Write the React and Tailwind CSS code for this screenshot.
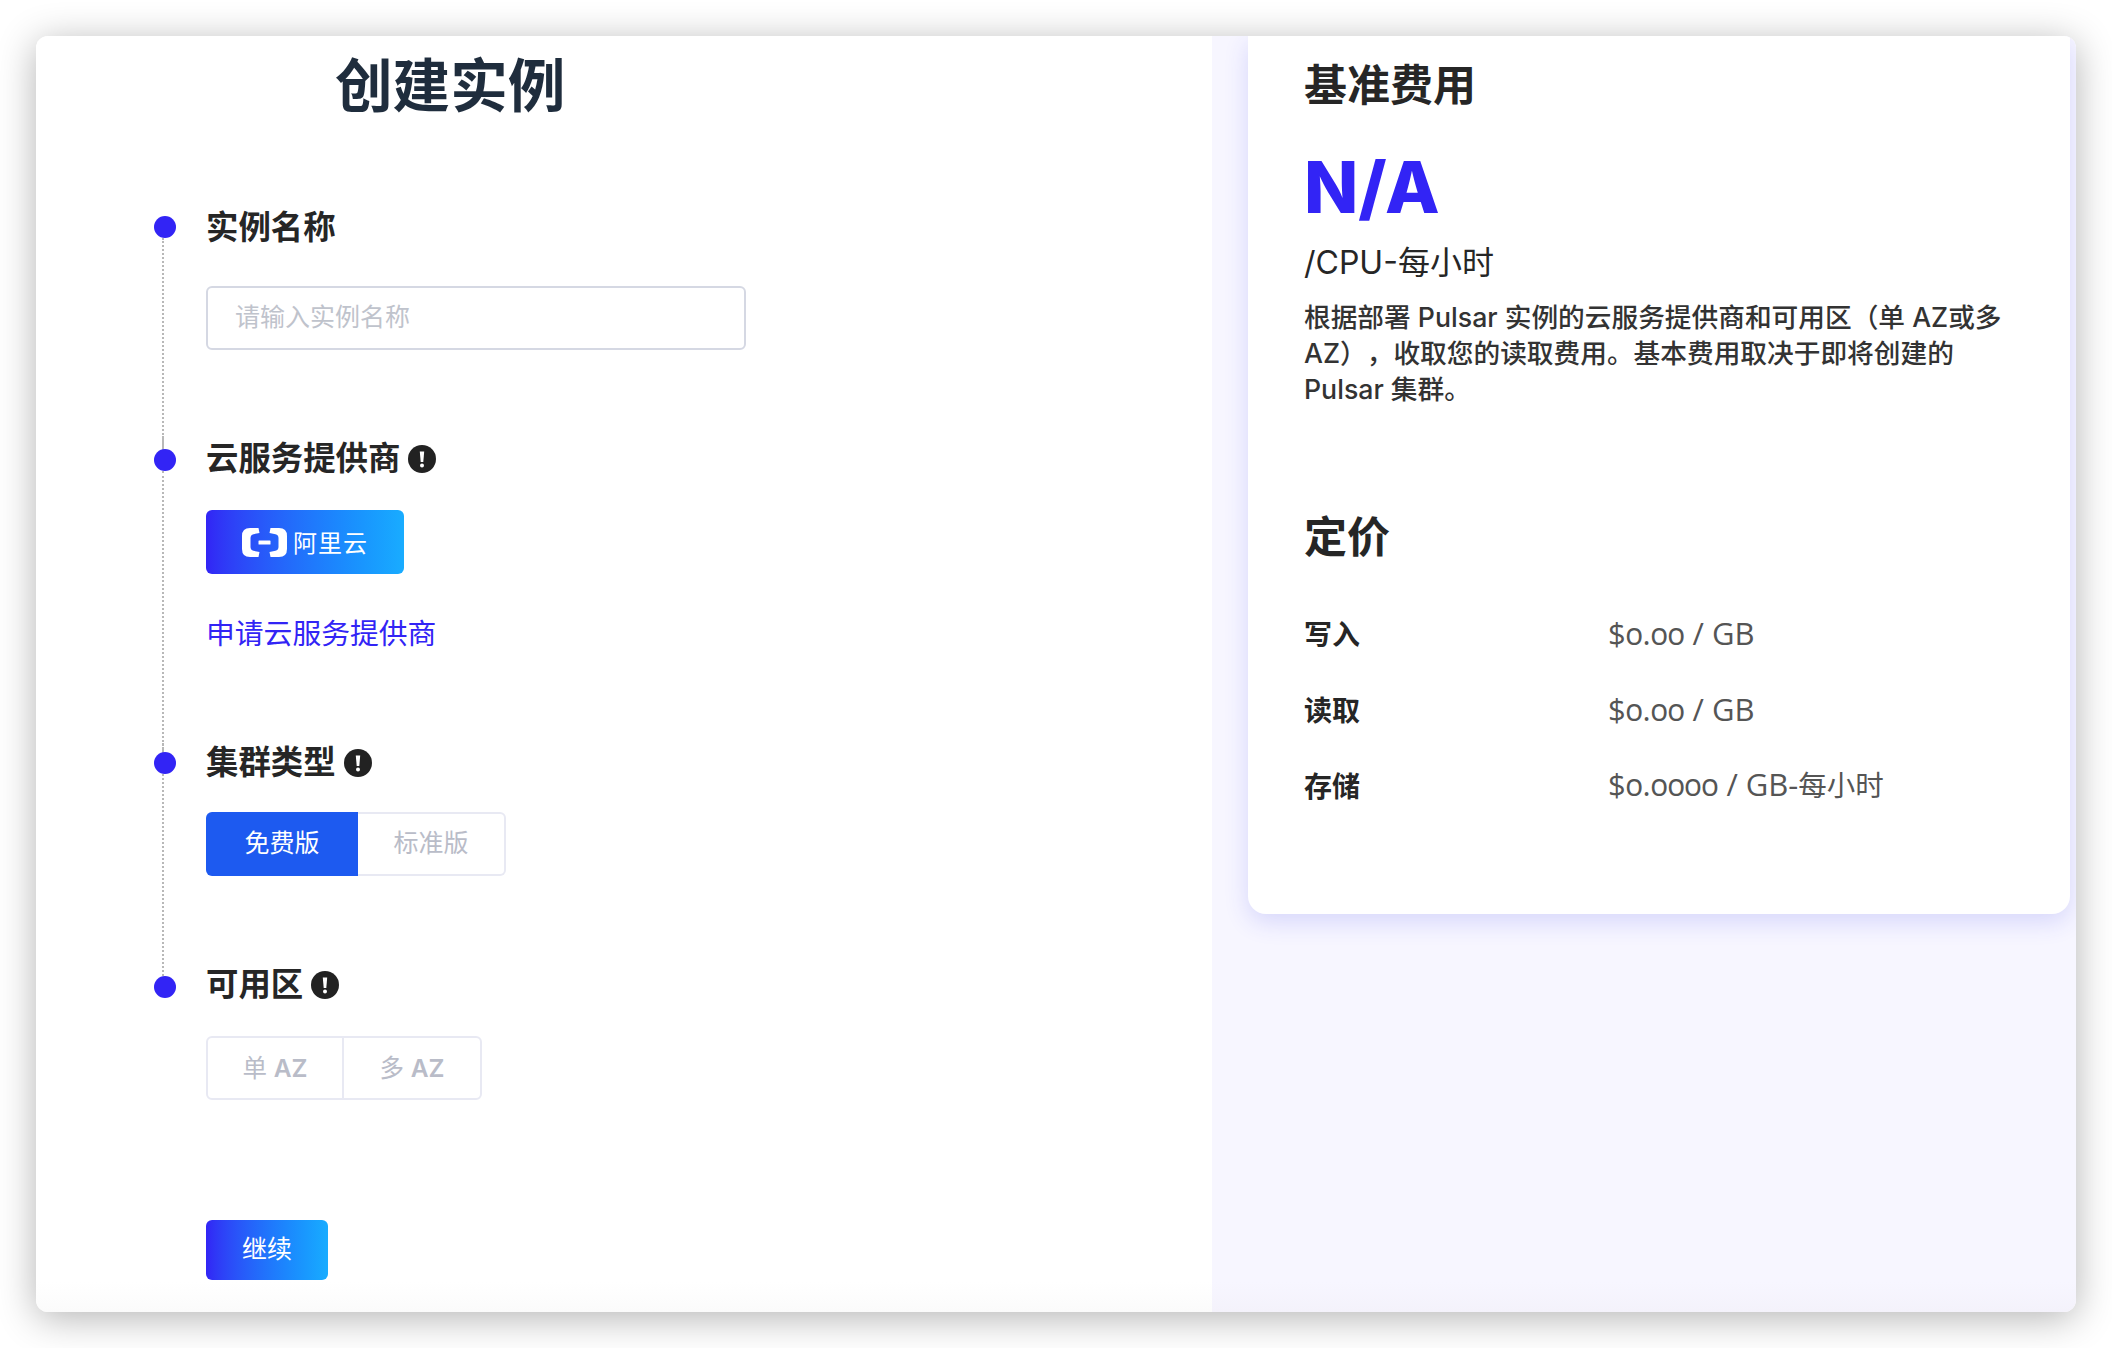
const BLUE = 'text-[#3224f5]'
const FONT = "font-['Inter','Noto_Sans_CJK_SC',sans-serif]"

function InfoIcon() {
  return (
    <svg width="28" height="28" viewBox="0 0 28 28" className="shrink-0">
      <circle cx="14" cy="14" r="14" fill="#222222" />
      <path fill="#ffffff" d="M11.8 6.5H16.2L15.3 17H12.7Z" />
      <circle cx="14" cy="20.6" r="2" fill="#ffffff" />
    </svg>
  )
}

function AliyunLogo() {
  return (
    <svg width="45" height="29" viewBox="0 0 45 29" className="shrink-0">
      <path fill="#ffffff" d="M16.5 0H8Q0 0 0 8V21Q0 29 8 29H16.5L17.5 24L11.5 22.8Q8.5 22 8.5 19V10Q8.5 7 11.5 6.2L17.5 5Z" />
      <path fill="#ffffff" d="M28.5 0H37Q45 0 45 8V21Q45 29 37 29H28.5L27.5 24L33.5 22.8Q36.5 22 36.5 19V10Q36.5 7 33.5 6.2L27.5 5Z" />
      <rect x="16.5" y="12.4" width="12" height="4.2" rx="0.6" fill="#ffffff" />
    </svg>
  )
}

// one row of the timeline: dot + dotted rail on the left, content on the right
function Step({ title, info, dotTop, first, last, pad, children }) {
  return (
    <div className={`flex gap-[30px] ${pad}`}>
      <div className="w-[22px] shrink-0 flex flex-col self-stretch -mb-[100px]">
        <div className={`${dotTop} ml-[8px] ${first ? '' : 'border-l-2 border-dotted border-[#b8b8b8]'}`} />
        <div className="w-[22px] h-[22px] rounded-full bg-[#3224f5] shrink-0" />
        {!last && <div className="flex-1 ml-[8px] border-l-2 border-dotted border-[#b8b8b8]" />}
      </div>
      <div className="flex-1">
        <div className="flex items-center gap-2 h-[46px] text-[32.4px] font-bold text-[#262626]">
          <span>{title}</span>
          {info && <InfoIcon />}
        </div>
        {children}
      </div>
    </div>
  )
}

function PriceRow({ label, value, unit }) {
  return (
    <div className="grid grid-cols-[304px_1fr] items-center h-[40px] text-[28px]">
      <span className="font-bold text-[#262626]">{label}</span>
      <span className="text-[#555555] text-[31px] leading-[40px] -mt-[5px] font-['Open_Sans','Noto_Sans_CJK_SC',sans-serif] oldstyle-nums">
        {value}
        {unit && <span className="text-[28.5px]">{unit}</span>}
      </span>
    </div>
  )
}

export default function App() {
  return (
    <div className={`w-[2112px] h-[1348px] overflow-hidden bg-white pt-[36px] pl-[36px] ${FONT}`}>
      <div className="w-[2040px] h-[1276px] flex rounded-[12px] overflow-hidden bg-white shadow-[0_6px_38px_rgba(0,0,0,0.3)]">
        {/* Left: create form */}
        <div className="w-[1176px] h-full overflow-hidden pl-[118px] pt-[22px] bg-[linear-gradient(to_bottom,#ffffff_calc(100%-30px),#fbfbfb)]">
          <h1 className="ml-[181px] mb-[91px] text-[57.6px] leading-[56px] font-bold text-[#1f2d3d]">创建实例</h1>

          <Step title="实例名称" dotTop="h-[11px]" first pad="pb-[86px]">
            <div className="mt-[35px] w-[540px] h-[64px] flex items-center px-[27px] rounded-[6px] border-2 border-[#d5d8e3] text-[25px] text-[#bfc3cc]">
              请输入实例名称
            </div>
          </Step>

          <Step title="云服务提供商" info dotTop="h-[13px]" pad="pb-[86px]">
            <button className="mt-[28px] w-[198px] h-[64px] flex items-center justify-center gap-[6px] rounded-[6px] bg-gradient-to-r from-[#3224f5] to-[#19acff] text-white text-[24px]">
              <AliyunLogo />
              <span className="tracking-[1px] mt-[3px]">阿里云</span>
            </button>
            <div className={`mt-[40px] h-[40px] flex items-center text-[28.8px] ${BLUE}`}>申请云服务提供商</div>
          </Step>

          <Step title="集群类型" info dotTop="h-[12px]" pad="pb-[86px]">
            <div className="mt-[26px] flex h-[64px] w-[300px] text-[25px]">
              <div className="w-[152px] flex items-center justify-center rounded-l-[6px] bg-[#1d5af0] text-white">免费版</div>
              <div className="flex-1 flex items-center justify-center rounded-r-[6px] border-2 border-l-0 border-[#e8e9f3] text-[#b9bcc8]">标准版</div>
            </div>
          </Step>

          <Step title="可用区" info dotTop="h-[14px]" last>
            <div className="mt-[28px] flex h-[64px] w-[276px] rounded-[6px] border-2 border-[#e8e9f3] text-[24.5px] text-[#b9bcc8]">
              <div className="w-[136px] flex items-center justify-center border-r-2 border-[#e8e9f3]">单&nbsp;<span className="font-semibold">AZ</span></div>
              <div className="flex-1 flex items-center justify-center">多&nbsp;<span className="font-semibold">AZ</span></div>
            </div>
            <button className="mt-[120px] w-[122px] h-[60px] flex items-center justify-center rounded-[6px] bg-gradient-to-r from-[#3224f5] to-[#19acff] text-white text-[25px]">
              继续
            </button>
          </Step>
        </div>

        {/* Right: pricing */}
        <div className="flex-1 h-full pl-[36px] pr-[6px] bg-[linear-gradient(to_bottom,#f7f6ff_calc(100%-30px),#f4f2fb)]">
          <div className="h-[878px] bg-white rounded-b-[18px] shadow-[0_8px_24px_#d6d6fb] pl-[56px] pr-[56px] pt-[21px]">
            <h2 className="text-[43px] leading-[56px] font-semibold text-[#262626]">基准费用</h2>
            <div className={`mt-[38px] text-[71px] leading-[72px] font-extrabold ${BLUE}`}>N/A</div>
            <div className="mt-[18px] text-[32px] leading-[44px] text-[#262626]">/CPU-每小时</div>
            <p className="mt-[14px] text-[26.7px] leading-[36px] font-medium text-[#333333] [text-spacing-trim:space-all]">
              根据部署 Pulsar 实例的云服务提供商和可用区（单 AZ或多 AZ），收取您的读取费用。基本费用取决于即将创建的 Pulsar 集群。
            </p>
            <h2 className="mt-[102px] text-[43px] leading-[56px] font-semibold text-[#262626]">定价</h2>
            <div className="mt-[49px] flex flex-col gap-[36px]">
              <PriceRow label="写入" value="$0.00 / GB" />
              <PriceRow label="读取" value="$0.00 / GB" />
              <PriceRow label="存储" value="$0.0000 / GB-" unit="每小时" />
            </div>
          </div>
        </div>
      </div>
    </div>
  )
}
